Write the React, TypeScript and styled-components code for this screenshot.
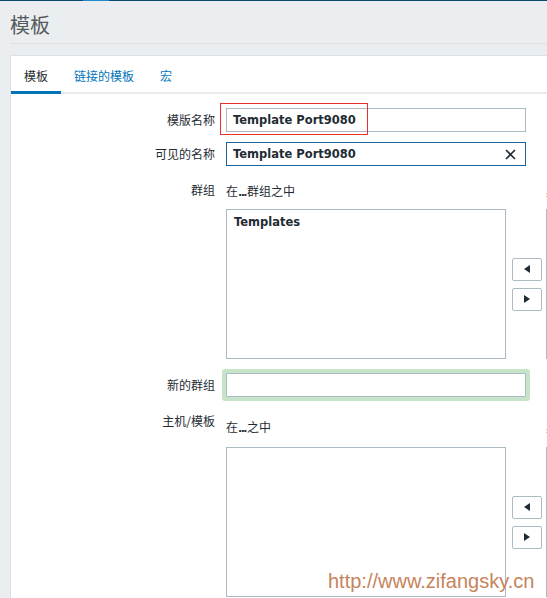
import styled, { createGlobalStyle } from "styled-components"

const GlobalStyle = createGlobalStyle`
  html, body {
    margin: 0;
    padding: 0;
    overflow: hidden;
    background: #ebeef0;
  }
  body {
    font-family: "Noto Sans CJK SC", "Liberation Sans", sans-serif;
    font-size: 12px;
    color: #1f2c33;
  }
`

const Page = styled.div`
  position: relative;
  width: 547px;
  height: 598px;
  overflow: hidden;
`

const TopBar = styled.div`
  height: 1px;
  background: #0b4a70;
  display: flex;
`

const TopBarMark = styled.div`
  margin-left: 83px;
  width: 26px;
  background: #1f8ad0;
`

const Header = styled.header`
  margin-left: 10px;
  height: 43px;
  padding-top: 5px;
  box-sizing: border-box;
  border-bottom: 1px solid #dde1e4;
  display: flex;
  align-items: center;
`

const Title = styled.h1`
  margin: 0;
  font-size: 20px;
  font-weight: normal;
  line-height: 1;
  color: #555a5e;
`

const Card = styled.section`
  margin: 11px 0 0 10px;
  width: 820px;
  height: 560px;
  background: #fff;
  border-top: 1px solid #dde2e6;
  border-left: 1px solid #dde2e6;
`

const TabList = styled.nav`
  display: flex;
  border-bottom: 2px solid #ebebeb;
`

const Tab = styled.div<{ $active?: boolean }>`
  height: 32px;
  padding: 3px 13px 0;
  display: flex;
  align-items: center;
  margin-bottom: -2px;
  border-bottom: 3px solid ${p => (p.$active ? "#0275b8" : "transparent")};
  color: ${p => (p.$active ? "#1f2c33" : "#0275b8")};
`

const Form = styled.div`
  padding-top: 14px;
`

const FormRow = styled.div`
  display: grid;
  grid-template-columns: 204px 1fr;
  column-gap: 11px;
  margin-bottom: 10px;
`

const Label = styled.div<{ $top?: number }>`
  text-align: right;
  line-height: 24px;
  padding-top: ${p => p.$top ?? 0}px;
  white-space: nowrap;
`

const FieldWrap = styled.div`
  position: relative;
  width: 300px;
`

const FieldBox = styled.div<{ $focused?: boolean; $glow?: boolean }>`
  display: flex;
  align-items: center;
  width: 300px;
  height: 24px;
  box-sizing: border-box;
  border: 1px solid ${p => (p.$focused ? "#1d6399" : "#acbbc2")};
  background: #fff;
  ${p => p.$glow && "margin-top: 4px; box-shadow: 0 0 0 4px #c6e5c8; border-radius: 1px;"}
`

const TextInput = styled.input`
  flex: 1;
  min-width: 0;
  height: 100%;
  border: 0;
  outline: none;
  padding: 0 6px;
  background: transparent;
  font-family: "DejaVu Sans", "Liberation Sans", sans-serif;
  font-weight: bold;
  font-size: 11.5px;
  color: #1f2c33;
`

const ClearButton = styled.span`
  width: 22px;
  height: 22px;
  display: flex;
  align-items: center;
  justify-content: center;
  margin-right: 4px;
`

const Highlight = styled.div`
  position: absolute;
  left: -6px;
  top: -5px;
  width: 148px;
  height: 32px;
  box-sizing: border-box;
  border: 1px solid #e8302e;
  pointer-events: none;
`

const TwinList = styled.div`
  display: grid;
  grid-template-columns: 280px 35px 280px;
  grid-template-rows: auto 150px;
`

const Caption = styled.div<{ $top: number; $gap: number; $col: number }>`
  grid-row: 1;
  grid-column: ${p => p.$col};
  margin-left: ${p => (p.$col === 3 ? 5 : 0)}px;
  line-height: 24px;
  padding-top: ${p => p.$top}px;
  padding-bottom: ${p => p.$gap}px;
  white-space: nowrap;
`

const Dots = styled.b`
  font-family: "DejaVu Sans", sans-serif;
  font-size: 11px;
  letter-spacing: -1.5px;
  margin-right: 1px;
`

const ListBox = styled.div<{ $col: number }>`
  grid-row: 2;
  grid-column: ${p => p.$col};
  margin-left: ${p => (p.$col === 3 ? 5 : 0)}px;
  box-sizing: border-box;
  border: 1px solid #acbbc2;
  padding: 5px 7px;
  font-family: "DejaVu Sans", "Liberation Sans", sans-serif;
  font-weight: bold;
  font-size: 11.5px;
`

const ButtonColumn = styled.div`
  grid-row: 2;
  grid-column: 2;
  margin-left: 6px;
  display: flex;
  flex-direction: column;
  justify-content: center;
  gap: 7px;
`

const ArrowButton = styled.button`
  width: 30px;
  height: 23px;
  padding: 0;
  box-sizing: border-box;
  border: 1px solid #acbbc2;
  border-radius: 2px;
  background: #fff;
  display: flex;
  align-items: center;
  justify-content: center;
`

const Watermark = styled.div`
  position: absolute;
  left: 328px;
  top: 570px;
  font-family: "Liberation Sans", Arial, sans-serif;
  font-size: 20px;
  line-height: 23px;
  color: #c6845c;
  white-space: nowrap;
`

const Triangle = ({ dir }: { dir: "left" | "right" }) => (
  <svg width="6" height="8" viewBox="0 0 6 8">
    {dir === "left" ? (
      <polygon points="6,0 6,8 0,4" fill="#1f2c33" />
    ) : (
      <polygon points="0,0 0,8 6,4" fill="#1f2c33" />
    )}
  </svg>
)

const ClearIcon = () => (
  <svg width="11" height="11" viewBox="0 0 11 11">
    <path d="M1 1 L10 10 M10 1 L1 10" stroke="#1f2c33" strokeWidth="1.6" />
  </svg>
)

type TwinProps = {
  caption: React.ReactNode
  other: string
  captionTop: number
  listGap: number
  items: string[]
}

const Twin = ({ caption, other, captionTop, listGap, items }: TwinProps) => (
  <TwinList>
    <Caption $col={1} $top={captionTop} $gap={listGap}>
      {caption}
    </Caption>
    <Caption $col={3} $top={captionTop} $gap={listGap}>
      {other}
    </Caption>
    <ListBox $col={1}>
      {items.map(i => (
        <div key={i}>{i}</div>
      ))}
    </ListBox>
    <ButtonColumn>
      <ArrowButton>
        <Triangle dir="left" />
      </ArrowButton>
      <ArrowButton>
        <Triangle dir="right" />
      </ArrowButton>
    </ButtonColumn>
    <ListBox $col={3} />
  </TwinList>
)

const App = () => {
  return (
    <Page>
      <GlobalStyle />
      <TopBar>
        <TopBarMark />
      </TopBar>
      <Header>
        <Title>模板</Title>
      </Header>
      <Card>
        <TabList>
          <Tab $active>模板</Tab>
          <Tab>链接的模板</Tab>
          <Tab>宏</Tab>
        </TabList>
        <Form>
          <FormRow>
            <Label>模版名称</Label>
            <FieldWrap>
              <FieldBox>
                <TextInput readOnly value="Template Port9080" />
              </FieldBox>
              <Highlight />
            </FieldWrap>
          </FormRow>
          <FormRow>
            <Label>可见的名称</Label>
            <FieldBox $focused>
              <TextInput readOnly value="Template Port9080" />
              <ClearButton>
                <ClearIcon />
              </ClearButton>
            </FieldBox>
          </FormRow>
          <FormRow>
            <Label $top={2}>群组</Label>
            <Twin
              caption={<>在<Dots>...</Dots>群组之中</>}
              other="其他 | 群组"
              captionTop={3}
              listGap={4}
              items={["Templates"]}
            />
          </FormRow>
          <FormRow>
            <Label $top={4}>新的群组</Label>
            <FieldBox $glow>
              <TextInput readOnly value="" />
            </FieldBox>
          </FormRow>
          <FormRow>
            <Label $top={2}>主机/模板</Label>
            <Twin
              caption={<>在<Dots>...</Dots>之中</>}
              other="其他 | 群组"
              captionTop={8}
              listGap={6}
              items={[]}
            />
          </FormRow>
        </Form>
      </Card>
      <Watermark>http://www.zifangsky.cn</Watermark>
    </Page>
  )
}

export default App
